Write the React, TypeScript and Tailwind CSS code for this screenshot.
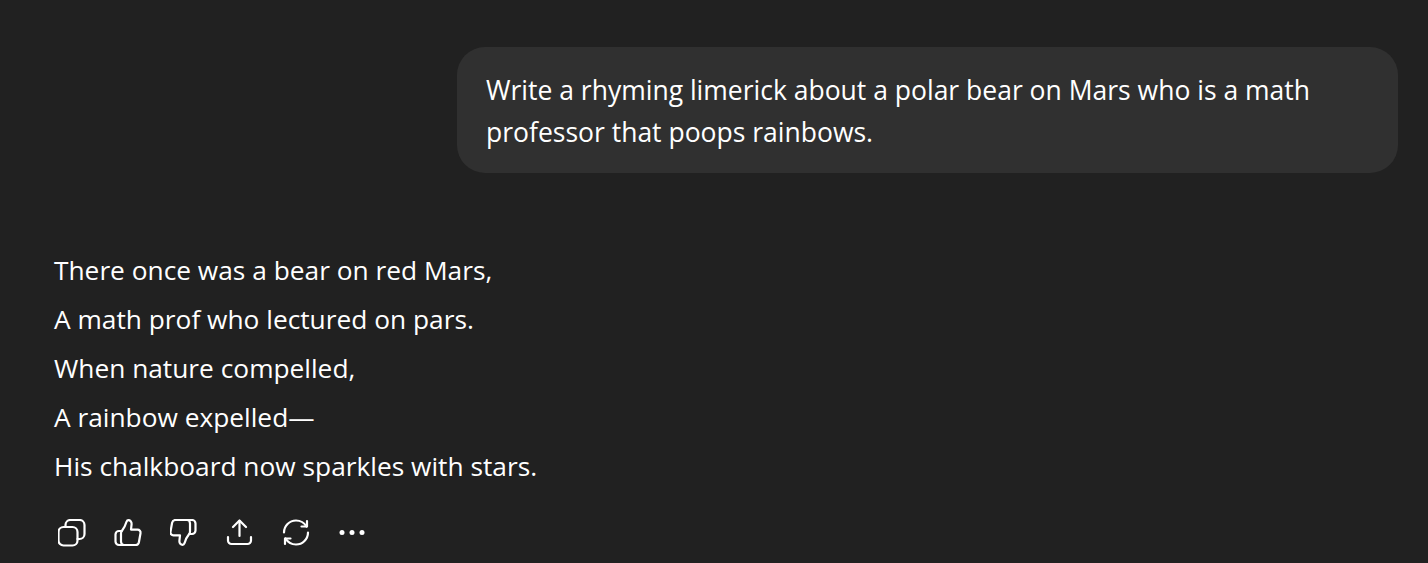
import React from 'react';

const lines = [
  'There once was a bear on red Mars,',
  'A math prof who lectured on pars.',
  'When nature compelled,',
  'A rainbow expelled—',
  'His chalkboard now sparkles with stars.',
];

function Icon({ children }: { children: React.ReactNode }) {
  return (
    <svg width="28" height="28" viewBox="0 0 28 28" fill="none" stroke="#fff" strokeWidth="2.2" strokeLinecap="round" strokeLinejoin="round" className="shrink-0">
      {children}
    </svg>
  );
}

function Thumb() {
  return (
    <>
      <path d="M10 26h11.500a3.500 3.500 0 0 0 3.400-2.800l1.600-9a3 3 0 0 0-3-3.600h-6.500l.6-5.500c.2-2.500-1.500-4-3.200-4-1 0-1.500.6-1.900 1.700C11.500 6.500 9.500 10 7.500 12.500c-.5.800-.5 1.500-.5 2v8c0 2 1.500 3.500 3 3.500z" />
      <path d="M7.500 12H5a3.500 3.500 0 0 0-3.500 3.500v7A3.500 3.500 0 0 0 5 26h5" />
    </>
  );
}

export default function App() {
  return (
    <div className="h-[563px] overflow-hidden bg-[#212121] text-white font-['Open_Sans',sans-serif]">
      <div className="flex justify-end pt-[47px] pr-[30px]">
        <div className="w-[941px] h-[126px] rounded-[28px] bg-[#303030] px-[29px] py-[22px] text-[26.5px] leading-[42px]">
          Write a rhyming limerick about a polar bear on Mars who is a math professor that poops rainbows.
        </div>
      </div>
      <div className="pl-[54px] pt-[73px] text-[26.3px] leading-[49px]">
        {lines.map((line) => (
          <div key={line}>{line}</div>
        ))}
      </div>
      <div className="flex items-center gap-[28px] pl-[58px] pt-[28px]">
        <Icon>
          <rect x="0.500" y="8" width="19" height="18.500" rx="5" />
          <path d="M7.500 8V6a5 5 0 0 1 5-5h9a5 5 0 0 1 5 5v9a5 5 0 0 1-5 5h-2" />
        </Icon>
        <Icon>
          <Thumb />
        </Icon>
        <Icon>
          <g transform="translate(-1 0) rotate(180 14 13.500)">
            <Thumb />
          </g>
        </Icon>
        <Icon>
          <path d="M13.500 17V2" />
          <path d="M7 8l6.500-6.500L20 8" />
          <path d="M2 18v3.500A3.500 3.500 0 0 0 5.500 25h16a3.500 3.500 0 0 0 3.500-3.500V18" />
        </Icon>
        <Icon>
          <path d="M2 13.500C2 6.900 7.400 1.500 14 1.500c4.500 0 8.300 2.400 10.500 6" />
          <path d="M25 2v5.500h-5.500" />
          <path d="M26 13.500c0 6.600-5.400 12-12 12-4.500 0-8.300-2.400-10.500-6" />
          <path d="M3 25v-5.500h5.500" />
        </Icon>
        <Icon>
          <circle cx="4" cy="13.500" r="2.500" fill="#fff" stroke="none" />
          <circle cx="14" cy="13.500" r="2.500" fill="#fff" stroke="none" />
          <circle cx="24" cy="13.500" r="2.500" fill="#fff" stroke="none" />
        </Icon>
      </div>
    </div>
  );
}
